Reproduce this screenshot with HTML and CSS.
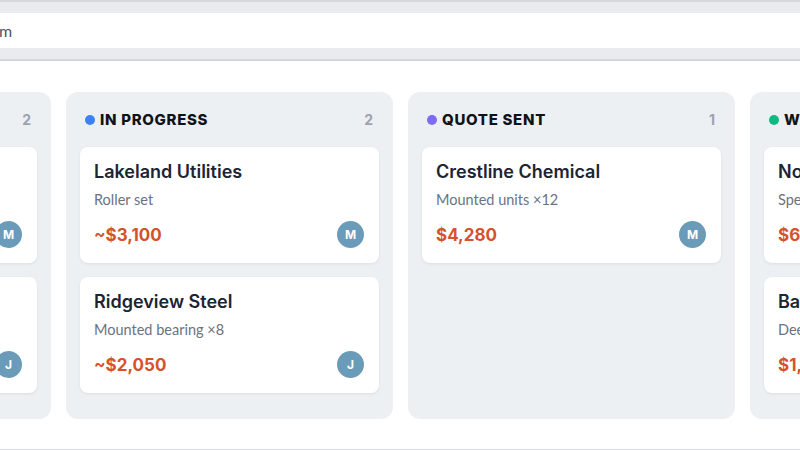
FILE: index.html
```html
<!DOCTYPE html>
<html lang="en">
<head>
<meta charset="utf-8">
<title>Pipeline</title>
<link rel="stylesheet" href="styles.css">
</head>
<body>
<div class="page">
  <div class="toolbar">
    <div class="search"><span class="search-text">m</span></div>
  </div>
  <div class="board">
    <section class="column">
      <header class="col-head"><span class="dot dot-gray"></span><span class="col-title">NEW LEADS</span><span class="count">2</span></header>
      <article class="card">
        <h3 class="card-title">Harbor Foods</h3>
        <p class="card-sub">Pillow blocks ×4</p>
        <div class="card-foot"><span class="price">$1,260</span><span class="avatar">M</span></div>
      </article>
      <article class="card">
        <h3 class="card-title">Summit Paper</h3>
        <p class="card-sub">Taper roller kit</p>
        <div class="card-foot"><span class="price">$2,900</span><span class="avatar">J</span></div>
      </article>
    </section>
    <section class="column">
      <header class="col-head"><span class="dot dot-blue"></span><span class="col-title">IN PROGRESS</span><span class="count">2</span></header>
      <article class="card">
        <h3 class="card-title">Lakeland Utilities</h3>
        <p class="card-sub">Roller set</p>
        <div class="card-foot"><span class="price">~$3,100</span><span class="avatar">M</span></div>
      </article>
      <article class="card">
        <h3 class="card-title">Ridgeview Steel</h3>
        <p class="card-sub">Mounted bearing ×8</p>
        <div class="card-foot"><span class="price">~$2,050</span><span class="avatar">J</span></div>
      </article>
    </section>
    <section class="column">
      <header class="col-head"><span class="dot dot-purple"></span><span class="col-title">QUOTE SENT</span><span class="count">1</span></header>
      <article class="card">
        <h3 class="card-title">Crestline Chemical</h3>
        <p class="card-sub">Mounted units ×12</p>
        <div class="card-foot"><span class="price">$4,280</span><span class="avatar">M</span></div>
      </article>
    </section>
    <section class="column">
      <header class="col-head"><span class="dot dot-green"></span><span class="col-title">WON</span><span class="count">2</span></header>
      <article class="card">
        <h3 class="card-title">Northgate Mining</h3>
        <p class="card-sub">Special order ×6</p>
        <div class="card-foot"><span class="price">$6,420</span><span class="avatar">J</span></div>
      </article>
      <article class="card">
        <h3 class="card-title">Bayside Marine</h3>
        <p class="card-sub">Deep groove ×20</p>
        <div class="card-foot"><span class="price">$1,940</span><span class="avatar">M</span></div>
      </article>
    </section>
  </div>
</div>
</body>
</html>
```

FILE: styles.css
```css
* { box-sizing: border-box; }
html, body { margin: 0; padding: 0; background: #ffffff; }
body {
  width: 800px;
  height: 450px;
  overflow: hidden;
  font-family: "Lato", "Noto Sans", sans-serif;
}
.page {
  height: 450px;
  border-bottom: 1px solid #d6d9de;
  overflow: hidden;
}
.toolbar {
  background: #e9ebef;
  border-top: 2px solid #d5d8dd;
  border-bottom: 2px solid #d3d6db;
  padding: 11px 0 11px 0;
}
.search {
  height: 35px;
  background: #ffffff;
  display: flex;
  align-items: center;
  overflow: hidden;
}
.search-text {
  font-family: "Lato", sans-serif;
  font-size: 16px;
  color: #4b5563;
  margin-left: -1px;
}
.board {
  display: flex;
  align-items: stretch;
  gap: 15px;
  margin-left: -276px;
  padding-top: 31px;
}
.column {
  flex: 0 0 327px;
  background: #edf0f3;
  border-radius: 12px;
  padding: 14px 14px 26px 14px;
  display: flex;
  flex-direction: column;
  gap: 14px;
}
.col-head {
  height: 27px;
  display: flex;
  align-items: center;
  padding: 0 6px 0 5px;
}
.dot {
  width: 10px;
  height: 10px;
  border-radius: 50%;
  margin-right: 5px;
  flex: none;
}
.dot-gray { background: #9ca3af; }
.dot-blue { background: #3b82f6; }
.dot-purple { background: #7b6cf2; }
.dot-green { background: #10b981; }
.col-title {
  font-family: "Inter", sans-serif;
  font-weight: 800;
  font-size: 15px;
  letter-spacing: 0.7px;
  color: #111318;
}
.count {
  margin-left: auto;
  font-family: "Inter", sans-serif;
  font-weight: 700;
  font-size: 14px;
  color: #9ca3af;
}
.card {
  background: #ffffff;
  border-radius: 8px;
  box-shadow: 0 1px 3px rgba(15, 23, 42, 0.08);
  padding: 13px 15px 15px 14px;
}
.card-title {
  margin: 0;
  font-family: "Inter", sans-serif;
  font-weight: 600;
  font-size: 18px;
  line-height: 24px;
  color: #1d2433;
  white-space: nowrap;
}
.card-sub {
  margin: 6px 0 0 0;
  font-size: 14.5px;
  line-height: 20px;
  color: #6b7280;
  white-space: nowrap;
}
.card-foot {
  margin-top: 11px;
  display: flex;
  align-items: center;
  justify-content: space-between;
}
.price {
  font-family: "Inter", sans-serif;
  font-weight: 700;
  font-size: 17px;
  color: #d4532b;
}
.avatar {
  width: 27px;
  height: 27px;
  border-radius: 50%;
  background: #6a9bb9;
  color: #ffffff;
  font-family: "Inter", sans-serif;
  font-weight: 700;
  font-size: 12px;
  display: flex;
  align-items: center;
  justify-content: center;
}
```
